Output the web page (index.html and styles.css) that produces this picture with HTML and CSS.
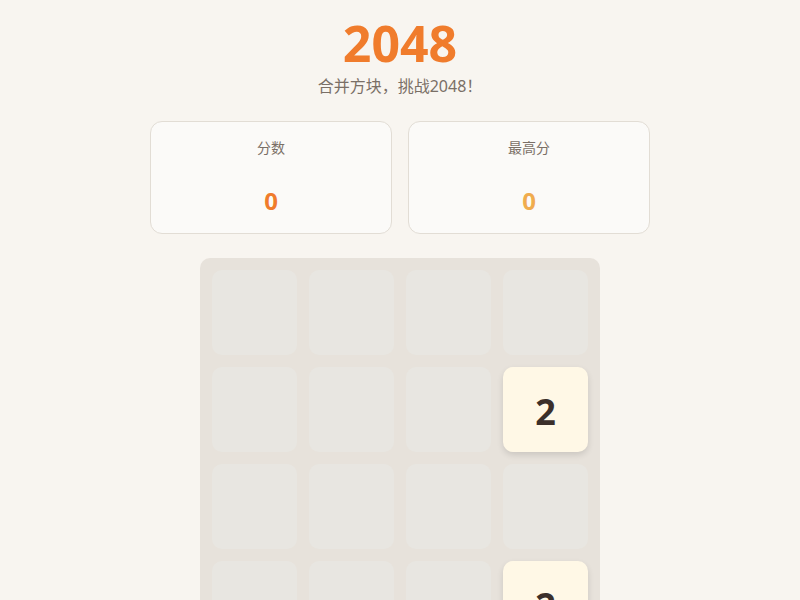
FILE: index.html
```html
<!DOCTYPE html>
<html lang="zh-CN">
<head>
    <meta charset="UTF-8">
    <meta name="viewport" content="width=device-width, initial-scale=1.0">
    <title>2048</title>
    <link rel="stylesheet" href="styles.css">
</head>
<body>
    <div class="container">
        <header class="header">
            <h1 class="title">2048</h1>
            <p class="subtitle">合并方块，挑战2048！</p>
        </header>

        <div class="scores">
            <div class="score-card">
                <span class="score-label">分数</span>
                <span class="score-value" id="score">0</span>
            </div>
            <div class="score-card">
                <span class="score-label">最高分</span>
                <span class="score-value best" id="best">0</span>
            </div>
        </div>

        <div class="board" id="board">
            <div class="cell"></div>
            <div class="cell"></div>
            <div class="cell"></div>
            <div class="cell"></div>

            <div class="cell"></div>
            <div class="cell"></div>
            <div class="cell"></div>
            <div class="cell tile tile-2">2</div>

            <div class="cell"></div>
            <div class="cell"></div>
            <div class="cell"></div>
            <div class="cell"></div>

            <div class="cell"></div>
            <div class="cell"></div>
            <div class="cell"></div>
            <div class="cell tile tile-2">2</div>
        </div>
    </div>
</body>
</html>
```

FILE: styles.css
```css
* {
    box-sizing: border-box;
}

body {
    font-family: "Noto Sans", "Noto Sans CJK JP", sans-serif;
    margin: 0;
    padding: 12px 0 0 0;
    background: #f8f5f0;
    color: #3b2f2a;
}

.container {
    width: 500px;
    margin: 0 auto;
    display: flex;
    flex-direction: column;
    align-items: center;
}

.header {
    text-align: center;
}

.title {
    margin: 0;
    font-size: 50px;
    line-height: 62px;
    font-weight: 700;
    color: #f07c2c;
}

.subtitle {
    margin: 0;
    font-size: 16px;
    line-height: 24px;
    color: #7a6f66;
}

/* Score cards */
.scores {
    width: 100%;
    display: grid;
    grid-template-columns: 1fr 1fr;
    gap: 16px;
    margin-top: 23px;
}

.score-card {
    background: #fbfaf8;
    border: 1px solid #e2ddd5;
    border-radius: 12px;
    padding: 15px 16px;
    min-height: 113px;
    display: flex;
    flex-direction: column;
    align-items: center;
    justify-content: space-between;
}

.score-label {
    font-size: 14px;
    line-height: 22px;
    color: #7a6f66;
}

.score-value {
    font-size: 24px;
    line-height: 34px;
    font-weight: 700;
    color: #f07c2c;
}

.score-value.best {
    color: #f0ac4e;
}

/* Board */
.board {
    margin-top: 24px;
    width: 400px;
    padding: 12px;
    background: #e7e2db;
    border-radius: 10px;
    display: grid;
    grid-template-columns: repeat(4, 85px);
    grid-auto-rows: 85px;
    gap: 12px;
}

.cell {
    background: #e8e6e1;
    border-radius: 10px;
    display: flex;
    align-items: center;
    justify-content: center;
}

.tile {
    padding-top: 3px;
    font-size: 36px;
    font-weight: 700;
    color: #3b2f2a;
    box-shadow: 0 3px 6px rgba(0, 0, 0, 0.12);
}

.tile-2 {
    background: #fff8e6;
}
```
